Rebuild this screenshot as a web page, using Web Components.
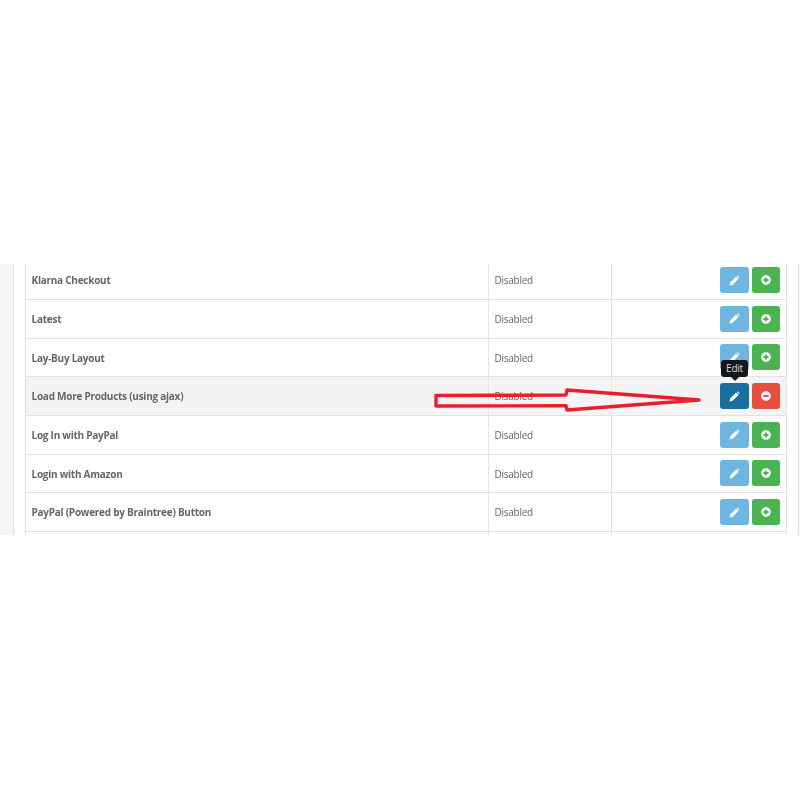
<!DOCTYPE html>
<html>
<head>
<meta charset="utf-8">
<title>Extensions</title>
<style>
html, body { margin: 0; background: #fff; }
</style>
</head>
<body>
<template id="iconBtnTemplate">
<style>
:host {
  display: block;
  position: relative;
  width: 28px;
  height: 26px;
  border-radius: 3px;
  box-sizing: border-box;
}
:host([kind='edit']) { background: #6cb6e1; width: 29px; }
:host([kind='add']) { background: #4bb34f; }
:host([kind='remove']) { background: #e74f3e; }
:host([kind='edit'][active]) { background: #1a6fa0; }
#icon {
  display: flex;
  align-items: center;
  justify-content: center;
  width: 100%;
  height: 100%;
}
svg { display: block; }
#tip {
  position: absolute;
  left: 1px;
  top: -23px;
  width: 27px;
  height: 17px;
  background: #15171a;
  border-radius: 3px;
  color: #ddd;
  font: 10px/16px 'Open Sans', sans-serif;
  text-align: center;
}
#tip::after {
  content: '';
  position: absolute;
  left: 10px;
  top: 17px;
  border: 4px solid transparent;
  border-bottom: 0;
  border-top-color: #15171a;
}
</style>
<div id="icon"></div>
</template>

<template id="extRowTemplate">
<style>
:host {
  display: grid;
  grid-template-columns: 463px 123px 1fr;
  height: 38.7px;
  box-sizing: border-box;
  border-bottom: 1px solid #e2e2e2;
  color: #666;
  font: 10px 'Open Sans', sans-serif;
  letter-spacing: -0.25px;
}
:host([hover]) { background: #f4f4f4; }
:host([blank]) { border-bottom: 0; }
.cell {
  display: flex;
  align-items: center;
  box-sizing: border-box;
  border-right: 1px solid #e6e6e6;
  padding: 0.5px 6px 0 5.5px;
  min-width: 0;
}
#name { font-weight: 700; }
#actions {
  justify-content: flex-end;
  gap: 3px;
  border-right: 0;
  padding-top: 0;
}
</style>
<div class="cell" id="name"></div>
<div class="cell" id="status"></div>
<div class="cell" id="actions"></div>
</template>

<template id="extTableTemplate">
<style>
:host {
  display: block;
  flex: 1;
  min-width: 0;
  box-sizing: border-box;
  border-left: 1px solid #e2e2e2;
  border-right: 1px solid #e2e2e2;
  margin-top: -2.8px;
}
</style>
<slot></slot>
</template>

<template id="shotPageTemplate">
<style>
:host {
  display: block;
  padding-top: 264px;
}
#shot {
  position: relative;
  display: flex;
  height: 271px;
  overflow: hidden;
  /* the reference is a resized jpeg, everything is a little soft */
  filter: blur(0.35px);
}
#sidebar {
  flex: 0 0 14px;
  box-sizing: border-box;
  background: #f5f5f5;
  border-right: 1px solid #e2e2e2;
  margin-right: 11px;
}
#far {
  flex: 0 0 2px;
  box-sizing: border-box;
  background: #f5f5f5;
  border-left: 1px solid #e2e2e2;
  margin-left: 11px;
}
#arrow {
  position: absolute;
  left: 430px;
  top: 120px;
  pointer-events: none;
}
</style>
<div id="shot">
  <div id="sidebar"></div>
  <slot></slot>
  <div id="far"></div>
  <svg id="arrow" width="275" height="35" viewBox="430 384 275 35">
    <path d="M436 395.5 L566 395 L567 390 L699 400 L567 410 L566 405.8 L436 406 Z" fill="none" stroke="#ed1c2b" stroke-width="3.4" stroke-linejoin="round"/>
  </svg>
</div>
</template>

<script>
// fa style glyphs, white with the button colour showing through
const ICONS = {
  edit: '<svg width="11" height="11" viewBox="0 0 11 11"><path d="M0.6 10.4 L1.2 7.4 L7.1 1.5 L9.5 3.9 L3.6 9.8 Z" fill="#fff"/><path d="M7.8 0.9 C8.4 0.4 9 0.4 9.5 0.9 L10.1 1.5 C10.6 2 10.6 2.6 10.1 3.2 Z" fill="#fff"/></svg>',
  add: '<svg width="10" height="10" viewBox="0 0 10 10"><path fill-rule="evenodd" fill="#fff" d="M5 0.2 A4.8 4.8 0 1 1 5 9.8 A4.8 4.8 0 1 1 5 0.2 Z M4.1 2.4 V4.1 H2.4 V5.9 H4.1 V7.6 H5.9 V5.9 H7.6 V4.1 H5.9 V2.4 Z"/></svg>',
  remove: '<svg width="10" height="10" viewBox="0 0 10 10"><path fill-rule="evenodd" fill="#fff" d="M5 0.2 A4.8 4.8 0 1 1 5 9.8 A4.8 4.8 0 1 1 5 0.2 Z M2.4 4.1 V5.9 H7.6 V4.1 Z"/></svg>'
};

class IconBtn extends HTMLElement {
  connectedCallback() {
    const root = this.attachShadow({ mode: 'open' });
    root.appendChild(document.getElementById('iconBtnTemplate').content.cloneNode(true));
    root.querySelector('#icon').innerHTML = ICONS[this.getAttribute('kind')];
    const tip = this.getAttribute('tip');
    if (tip) {
      const el = document.createElement('div');
      el.id = 'tip';
      el.textContent = tip;
      root.appendChild(el);
    }
  }
}

class ExtRow extends HTMLElement {
  connectedCallback() {
    const root = this.attachShadow({ mode: 'open' });
    root.appendChild(document.getElementById('extRowTemplate').content.cloneNode(true));
    if (this.hasAttribute('blank')) return;
    root.querySelector('#name').textContent = this.getAttribute('name');
    root.querySelector('#status').textContent = 'Disabled';
    const actions = root.querySelector('#actions');
    const edit = document.createElement('icon-btn');
    edit.setAttribute('kind', 'edit');
    const other = document.createElement('icon-btn');
    if (this.hasAttribute('hover')) {
      edit.setAttribute('active', '');
      edit.setAttribute('tip', 'Edit');
      other.setAttribute('kind', 'remove');
    } else {
      other.setAttribute('kind', 'add');
    }
    actions.append(edit, other);
  }
}

class ExtTable extends HTMLElement {
  connectedCallback() {
    this.attachShadow({ mode: 'open' }).appendChild(document.getElementById('extTableTemplate').content.cloneNode(true));
  }
}

class ShotPage extends HTMLElement {
  connectedCallback() {
    this.attachShadow({ mode: 'open' }).appendChild(document.getElementById('shotPageTemplate').content.cloneNode(true));
  }
}

customElements.define('icon-btn', IconBtn);
customElements.define('ext-row', ExtRow);
customElements.define('ext-table', ExtTable);
customElements.define('shot-page', ShotPage);
</script>

<shot-page>
  <ext-table>
    <ext-row name="Klarna Checkout"></ext-row>
    <ext-row name="Latest"></ext-row>
    <ext-row name="Lay-Buy Layout"></ext-row>
    <ext-row name="Load More Products (using ajax)" hover></ext-row>
    <ext-row name="Log In with PayPal"></ext-row>
    <ext-row name="Login with Amazon"></ext-row>
    <ext-row name="PayPal (Powered by Braintree) Button"></ext-row>
    <ext-row blank></ext-row>
  </ext-table>
</shot-page>
</body>
</html>
